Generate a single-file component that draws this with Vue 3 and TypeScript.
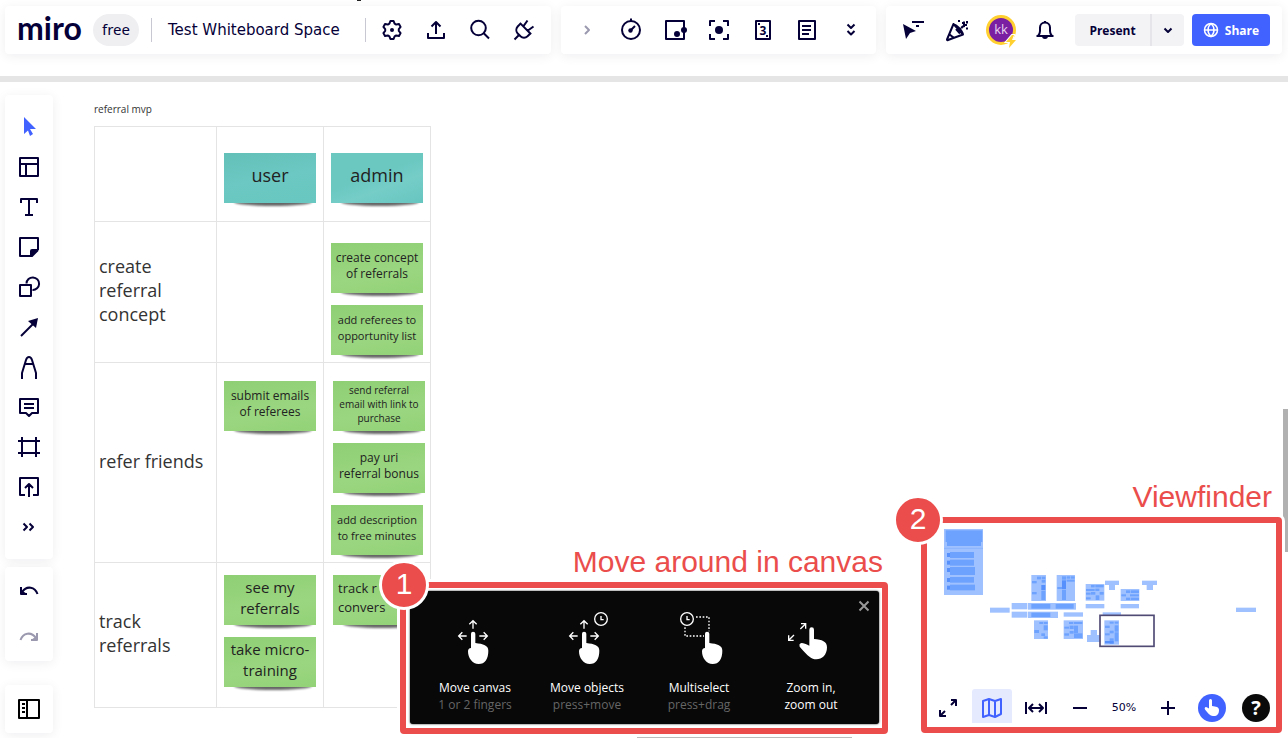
<script setup lang="ts">
interface Icon {
  name: string
  line?: string
  solid?: string
  glyph?: string
  tone?: string
}

interface Note {
  text: string[]
  size: string
  shifted?: boolean
}

interface Row {
  label: string[]
  kind: string
  user: Note[]
  admin: Note[]
}

interface Block {
  x: number
  y: number
  w: number
  h: number
  tone: string
}

const ring = (x: number, y: number, r: number): string =>
  `M${x - r} ${y}a${r} ${r} 0 1 0 ${2 * r} 0a${r} ${r} 0 1 0 ${-2 * r} 0Z`

const boardActions: Icon[] = [
  {
    name: 'Settings',
    line: 'M-1.6-9H1.6L2.6-6.3L4.2-5.4L7-5.9L8.6-3.1L6.8-.9V.9L8.6 3.1L7 5.9L4.2 5.4L2.6 6.3L1.6 9H-1.6L-2.6 6.3L-4.2 5.4L-7 5.9L-8.6 3.1L-6.8 .9V-.9L-8.6-3.1L-7-5.9L-4.2-5.4L-2.6-6.3Z',
    solid: ring(0, 0, 2),
  },
  { name: 'Export', line: 'M-8 3V8H8V3M0-8V4M-4.500-3.500L0-8L4.500-3.500' },
  { name: 'Search', line: ring(-1.5, -2, 7.3) + 'M4 3.500L9 8.500' },
  {
    name: 'Apps',
    line: 'M-4.200-7.100L7.100 4.200M-3.500-6.400L-6.300-3.500A5.200 5.200 0 0 0-6.300 3.500L-3.500 6.300A5.200 5.200 0 0 0 3.500 6.300L6.400 3.500M-5.500 5.500L-9.500 9.500M-.7-3.600L3.500-9.500M3.600 .7L9.500-3.500',
  },
]

const widgets: Icon[] = [
  { name: 'Collapse', line: 'M-2-4L2 0L-2 4', tone: 'muted' },
  { name: 'Timer', line: ring(0, 0, 9) + 'M0-11.500V-9M0 0L4-4', solid: ring(-0.5, 0.5, 2.2) },
  { name: 'Video chat', line: 'M9-2V-9H-9V9H9V2', solid: ring(2, 4, 3) + ring(9, 0, 3) },
  { name: 'Focus', line: 'M-9-4V-9H-4M4-9H9V-4M9 4V9H4M-4 9H-9V4', solid: ring(0, 0, 4) },
  { name: 'Estimation', line: 'M-7-9H7V9H-7Z', solid: 'M-5-7H-3V-5H-5ZM3 5H5V7H3Z', glyph: '3' },
  { name: 'Notes', line: 'M-8-9H8V9H-8ZM-5-4H4M-5 0H4M-5 4H2' },
  { name: 'More', line: 'M-3.500-5.500L0-2L3.500-5.500M-3.500 1L0 4.500L3.500 1' },
]

const socials: Icon[] = [
  { name: 'Hide cursors', line: 'M-1-8H11M3-4H6', solid: 'M-10-6L3 1L-3 3L-7 9Z' },
  {
    name: 'Reactions',
    line: 'M-3.500-6L-10 9.500Q-10 10.500-9 10L6 4.500ZM-4-6Q3-3 6 4M-8 4L-3 8M-1-1L3 3.500M4.500-1.500Q4.500-4 8-4M10-9V-6.500M7-8.500V-5H10M9-1.500H11',
    solid: 'M1-10H3V-8H1ZM5-8H7V-6H5Z',
  },
]

const bell = 'M-8.500 6H8.500M-7 6Q-5 4-5 1V-2.500A5 5 0 0 1 5-2.500V1Q5 4 7 6'

const tools: Icon[] = [
  { name: 'Select', solid: 'M-5-10L7 2H1L4 7L1 9L-1 3.500L-5 7Z', tone: 'active' },
  { name: 'Templates', line: 'M-9-9H9V9H-9ZM-9-3H9M-3-3V9' },
  { name: 'Text', line: 'M-8-4V-8H8V-4M0-8V8M-4 8H4' },
  { name: 'Sticky note', line: 'M9 3V-9H-9V9H3L9 3', solid: 'M1 9V4Q1 2 3 2H9L3 9Z' },
  { name: 'Shapes', line: 'M-9-2H2V9H-9ZM-2.500-3.500A6.300 6.300 0 1 1 3.500 3' },
  { name: 'Connection line', line: 'M-8 9L5-4', solid: 'M9-9L7 1L-1-6Z' },
  { name: 'Pen', line: 'M-7 12V6L-3-7Q-2-10 0-10Q2-10 3-7L7 6V12M-4-3H4' },
  { name: 'Comment', line: 'M-9-8H9V6H3L0 9L-3 6H-9ZM-5-3H5M-5 1H5' },
  { name: 'Frame', line: 'M-7-10V10M7-10V10M-11-6H11M-11 6H11' },
  { name: 'Upload', line: 'M-4 8H-9V-9H9V8H4M0 10V-2M-4 1L0-3L4 1' },
  { name: 'More tools', line: 'M-5.500-3.500L-2 0L-5.500 3.500M.5-3.500L4 0L.5 3.500' },
]

const history: Icon[] = [
  { name: 'Undo', line: 'M8.500 3C6-4-2-6-7 1M-8-4V3H-2', solid: 'M-9-2L-2 3H-9Z' },
  { name: 'Redo', line: 'M-8.500 3C-6-4 2-6 7 1M8-4V3H2', solid: 'M9-2L2 3H9Z', tone: 'muted' },
]

const rows: Row[] = [
  {
    label: ['create', 'referral', 'concept'],
    kind: 'create',
    user: [],
    admin: [
      { text: ['create concept', 'of referrals'], size: 'medium' },
      { text: ['add referees to', 'opportunity list'], size: 'small' },
    ],
  },
  {
    label: ['refer friends'],
    kind: 'refer',
    user: [{ text: ['submit emails', 'of referees'], size: 'medium' }],
    admin: [
      { text: ['send referral', 'email with link to', 'purchase'], size: 'tiny', shifted: true },
      { text: ['pay uri', 'referral bonus'], size: 'medium', shifted: true },
      { text: ['add description', 'to free minutes'], size: 'small' },
    ],
  },
  {
    label: ['track', 'referrals'],
    kind: 'track',
    user: [
      { text: ['see my', 'referrals'], size: 'large' },
      { text: ['take micro-', 'training'], size: 'large' },
    ],
    admin: [{ text: ['track r', 'convers'], size: 'regular', shifted: true }],
  },
]

const block = (x: number, y: number, w: number, h: number, tone = 'pale'): Block => ({ x, y, w, h, tone })

const blocks: Block[] = [
  block(162, 177, 117, 198),
  block(167, 181, 110, 35, 'mid'), block(171, 216, 102, 12, 'mid'),
  ...[[246, 18, 72], [269, 18, 72], [291, 24, 75], [321, 17, 72], [344, 17, 75]].flatMap(([y, h, w]) => [
    block(180, y, w, h, 'mid'), block(171, y + 3, 9, 12, 'deep'),
  ]),
  block(300, 413, 59, 15), block(1038, 413, 60, 13),
  block(424, 315, 44, 78), block(500, 315, 55, 78), block(587, 342, 56, 50), block(692, 357, 56, 36),
  block(645, 332, 42, 13), block(657, 345, 18, 15), block(756, 332, 45, 13), block(770, 345, 19, 15),
  block(365, 399, 47, 19), block(414, 399, 144, 20), block(424, 402, 57, 14, 'mid'), block(497, 402, 54, 14, 'mid'),
  block(587, 402, 56, 13), block(692, 402, 55, 13),
  block(365, 425, 47, 18), block(414, 425, 90, 19), block(424, 428, 57, 13, 'mid'),
  block(521, 427, 58, 13), block(638, 427, 55, 10),
  block(432, 451, 42, 56), block(521, 451, 58, 56), block(591, 495, 40, 21), block(602, 480, 19, 15),
  block(643, 451, 44, 73),
  block(441, 320, 12, 8, 'mid'), block(455, 320, 11, 8, 'mid'), block(455, 330, 11, 8, 'mid'), block(426, 333, 14, 7, 'mid'),
  block(454, 345, 12, 15, 'deep'), block(454, 362, 12, 28, 'mid'), block(426, 366, 14, 7, 'mid'),
  block(516, 319, 12, 10, 'mid'), block(530, 319, 11, 7, 'mid'), block(543, 319, 11, 7, 'mid'), block(530, 329, 24, 6, 'mid'),
  block(516, 331, 12, 26, 'deep'), block(502, 351, 14, 6, 'mid'), block(516, 359, 12, 31, 'mid'),
  block(603, 345, 11, 7, 'mid'), block(616, 345, 25, 7, 'mid'), block(588, 357, 26, 6, 'mid'), block(616, 356, 12, 7, 'mid'),
  block(603, 366, 13, 8, 'mid'), block(629, 366, 12, 8, 'mid'), block(588, 368, 14, 6, 'mid'), block(617, 376, 11, 14, 'mid'), block(588, 382, 14, 6, 'mid'),
  block(708, 361, 12, 8, 'mid'), block(722, 361, 25, 8, 'mid'), block(694, 373, 14, 6, 'mid'), block(720, 373, 27, 6, 'mid'), block(708, 383, 12, 7, 'mid'), block(722, 383, 25, 7, 'mid'),
  block(448, 456, 12, 6, 'mid'), block(462, 456, 11, 6, 'mid'), block(461, 466, 12, 15, 'mid'), block(433, 480, 14, 9, 'mid'), block(454, 490, 11, 8, 'mid'), block(461, 499, 12, 7, 'mid'),
  block(537, 456, 12, 6, 'mid'), block(551, 456, 26, 6, 'mid'), block(523, 470, 14, 6, 'mid'), block(539, 467, 12, 10, 'mid'), block(552, 467, 12, 22, 'mid'),
  block(539, 483, 12, 8, 'mid'), block(523, 490, 14, 7, 'mid'), block(552, 490, 25, 14, 'mid'),
  block(659, 455, 12, 6, 'mid'), block(674, 455, 11, 6, 'mid'), block(645, 467, 14, 7, 'mid'), block(674, 466, 11, 19, 'mid'),
  block(659, 482, 12, 8, 'mid'), block(645, 490, 14, 6, 'mid'), block(674, 487, 11, 27, 'mid'), block(659, 505, 12, 17, 'mid'), block(645, 513, 26, 7, 'deep'),
]

const hand =
  'M213 281Q213 275 219 275Q226 275 226 281V309C250 312 265 316 265 332C265 356 255 372 236 372C217 372 204 354 204 334Q204 325 213 324Z'
const arrows = 'M219 243V266M208 253L219 242L230 253M177 288H200M187 277L176 288L187 299M238 288H261M251 277L262 288L251 299'

interface Tip {
  title: string
  detail: string
  bright?: boolean
  x: number
  solid: string
  solidX: number
  line: string
  lineX: number
  clock?: number
  dots?: string
}

const tips: Tip[] = [
  { title: 'Move canvas', detail: '1 or 2 fingers', x: 57, solid: hand, solidX: 0, line: arrows, lineX: 0 },
  { title: 'Move objects', detail: 'press+move', x: 393, solid: hand, solidX: 333, line: arrows, lineX: 333, clock: 603 },
  {
    title: 'Multiselect', detail: 'press+drag', x: 729, solid: hand, solidX: 702, line: '', lineX: 0, clock: 861,
    dots: 'M888 231H927V274M855 262V288H912',
  },
  {
    title: 'Zoom in,', detail: 'zoom out', bright: true, x: 1065, solidX: 0, lineX: 0,
    solid: 'M1228 269Q1228 262 1235 262Q1242 262 1242 269V297C1266 299 1281 304 1281 322C1281 345 1266 358 1249 358C1234 358 1226 350 1199 320Q1196 313 1202 310Q1208 307 1228 317Z',
    line: 'M1203 251H1217V266M1217 251L1201 267M1166 286V301H1181M1166 301L1182 285',
  },
]

const mapControls: Icon[] = [
  { name: 'Full screen', line: 'M3-3L8-8M3-8H8V-2M-3 3L-8 8M-8 2V8H-2' },
  { name: 'Map', line: 'M-9-7L-3-9L3-7L9-9V6L3 9L-3 7L-9 9ZM-3-9V7M3-7V9', tone: 'selected' },
  { name: 'Fit to screen', line: 'M-10-6V6M10-6V6M-6 0H6M-3-4L-7 0L-3 4M3-4L7 0L3 4' },
  { name: 'Zoom out', line: 'M-7 0H7' },
]
</script>

<template>
  <div class="page">
    <header class="header">
      <span class="mark"></span>
      <div class="card card-board">
        <a class="logo" href="#">miro</a>
        <span class="plan">free</span>
        <a class="board-name" href="#">Test Whiteboard Space</a>
        <button v-for="icon in boardActions" :key="icon.name" class="tool" :aria-label="icon.name">
          <svg class="icon" viewBox="-12 -12 24 24">
            <path class="line" :d="icon.line" />
            <path v-if="icon.solid" class="solid" :d="icon.solid" />
          </svg>
        </button>
      </div>
      <div class="card card-widgets">
        <button v-for="icon in widgets" :key="icon.name" class="tool" :class="icon.tone" :aria-label="icon.name">
          <svg class="icon" viewBox="-12 -12 24 24">
            <path class="line" :d="icon.line" />
            <path v-if="icon.solid" class="solid" :d="icon.solid" />
            <text v-if="icon.glyph" class="glyph" x="0" y="5">{{ icon.glyph }}</text>
          </svg>
        </button>
      </div>
      <div class="card card-share">
        <button v-for="icon in socials" :key="icon.name" class="tool" :aria-label="icon.name">
          <svg class="icon" viewBox="-12 -12 24 24">
            <path class="line" :d="icon.line" />
            <path class="solid" :d="icon.solid" />
          </svg>
        </button>
        <button class="tool" aria-label="Profile">
          <span class="avatar">
            kk
            <svg class="bolt" viewBox="0 0 14 14"><path d="M8 1L2 8H6L5 14L12 6H8L10 1Z" /></svg>
          </span>
        </button>
        <button class="tool" aria-label="Notifications">
          <svg class="icon" viewBox="-12 -12 24 24">
            <path class="line" :d="bell" />
            <path class="solid" d="M-3 6H3A3 3 0 0 1-3 6Z" />
            <path class="line" d="M0-9V-7" />
          </svg>
        </button>
        <div class="present">
          <button class="present-main">Present</button>
          <button class="present-more" aria-label="Present options">
            <svg class="icon" viewBox="-12 -12 24 24"><path class="line" d="M-3.500-1.500L0 2L3.500-1.500" /></svg>
          </button>
        </div>
        <button class="share">
          <svg class="globe" viewBox="-8 -8 16 16">
            <path :d="ring(0, 0, 6.500)" />
            <path d="M-6.500 0H6.500M0-6.500C-4-3-4 3 0 6.500C4 3 4-3 0-6.500" />
          </svg>
          Share
        </button>
      </div>
    </header>

    <main class="workspace">
      <nav class="rail">
        <div class="panel tools">
          <button v-for="icon in tools" :key="icon.name" class="tool" :class="icon.tone" :aria-label="icon.name">
            <svg class="icon" viewBox="-12 -12 24 24">
              <path v-if="icon.line" class="line" :d="icon.line" />
              <path v-if="icon.solid" class="solid" :d="icon.solid" />
            </svg>
          </button>
        </div>
        <div class="panel history">
          <button v-for="icon in history" :key="icon.name" class="tool" :class="icon.tone" :aria-label="icon.name">
            <svg class="icon" viewBox="-12 -12 24 24">
              <path class="line" :d="icon.line" />
              <path class="solid" :d="icon.solid" />
            </svg>
          </button>
        </div>
        <div class="panel frames">
          <button class="tool black" aria-label="Open frames">
            <svg class="icon" viewBox="-12 -12 24 24">
              <path class="line" d="M-10-9H10V9H-10ZM-2-9V9M-7-5H-4M-7-1H-4M-7 3H-4" />
            </svg>
          </button>
        </div>
      </nav>

      <section class="board">
        <h1 class="board-title">referral mvp</h1>
        <table class="grid">
          <thead>
            <tr class="row-head">
              <td class="label-col"></td>
              <th scope="col"><div class="note teal heading">user</div></th>
              <th scope="col"><div class="note teal heading alt">admin</div></th>
            </tr>
          </thead>
          <tbody>
            <tr v-for="row in rows" :key="row.kind" :class="'row-' + row.kind">
              <th class="row-label" scope="row">
                <span v-for="part in row.label" :key="part" class="text-line">{{ part }}</span>
              </th>
              <td v-for="(notes, column) in [row.user, row.admin]" :key="column">
                <div class="stack">
                  <div
                    v-for="note in notes"
                    :key="note.text[0]"
                    class="note"
                    :class="[note.size, { shifted: note.shifted }]"
                  >
                    <span v-for="part in note.text" :key="part" class="text-line">{{ part }}</span>
                  </div>
                </div>
              </td>
            </tr>
          </tbody>
        </table>
      </section>
    </main>

    <span class="scroll-y"></span>
    <span class="scroll-x"></span>

    <section class="callout callout-move">
      <h2 class="callout-name">Move around in canvas</h2>
      <div class="callout-box">
        <span class="badge">1</span>
        <div class="tips">
          <div v-for="tip in tips" :key="tip.title" class="tip">
            <svg class="tip-art" :viewBox="`${tip.x} 198 336 192`">
              <path class="tip-solid" :d="tip.solid" :transform="`translate(${tip.solidX} 0)`" />
              <path class="tip-line" :d="tip.line" :transform="`translate(${tip.lineX} 0)`" />
              <path v-if="tip.dots" class="tip-line tip-dots" :d="tip.dots" />
              <g v-if="tip.clock" class="tip-line" :transform="`translate(${tip.clock} 237)`">
                <circle r="19" />
                <path d="M0 -9V2H8" />
              </g>
            </svg>
            <strong class="tip-title">{{ tip.title }}</strong>
            <span class="tip-detail" :class="{ bright: tip.bright }">{{ tip.detail }}</span>
          </div>
          <button class="close" aria-label="Close">
            <svg viewBox="-6 -6 12 12"><path d="M-4.500-4.500L4.500 4.500M4.500-4.500L-4.500 4.500" /></svg>
          </button>
        </div>
      </div>
    </section>

    <section class="callout callout-view">
      <h2 class="callout-name">Viewfinder</h2>
      <div class="callout-box">
        <span class="badge">2</span>
        <svg class="minimap" viewBox="111 159 1047 498">
          <rect v-for="(b, i) in blocks" :key="i" :class="b.tone" :x="b.x" :y="b.y" :width="b.w" :height="b.h" />
          <path class="seam" d="M162 235H279" />
          <rect class="viewport" x="630" y="436" width="162" height="93" />
        </svg>
        <div class="map-bar">
          <button v-for="icon in mapControls" :key="icon.name" class="tool" :class="icon.tone" :aria-label="icon.name">
            <svg class="icon" viewBox="-12 -12 24 24"><path class="line" :d="icon.line" /></svg>
          </button>
          <button class="tool percent">50%</button>
          <button class="tool" aria-label="Zoom in">
            <svg class="icon" viewBox="-12 -12 24 24"><path class="line" d="M-7 0H7M0-7V7" /></svg>
          </button>
          <button class="tool" aria-label="Touch mode">
            <svg class="round" viewBox="-14 -14 28 28">
              <circle class="round-blue" r="14" />
              <path class="round-hand" d="M-3-7.500Q-3-9-1.500-9Q0-9 0-7.500V-2C4-1.500 7-1 7 2C7 6 5 8 2 8C-1 8-3 7-7 1.500Q-8-.5-6 -1Q-5-1-3 .5Z" />
            </svg>
          </button>
          <button class="tool help" aria-label="Help"><span class="help-dot">?</span></button>
        </div>
      </div>
    </section>
  </div>
</template>

<style>
body {
  margin: 0;
  background: #fff;
}
</style>

<style scoped>
.page {
  position: relative;
  display: flex;
  flex-direction: column;
  min-height: 100vh;
  overflow: hidden;
  background: #fff;
  color: #050038;
  font-family: "Open Sans", "Noto Sans", sans-serif;
}
button {
  margin: 0;
  padding: 0;
  border: 0;
  background: none;
  color: inherit;
  font: inherit;
  cursor: pointer;
}
a {
  color: inherit;
  text-decoration: none;
}
.header {
  position: relative;
  display: grid;
  grid-template-columns: 546fr 315fr 396fr;
  gap: 10px;
  padding: 6px 6px 22px 5px;
  border-bottom: 6px solid #e5e5e5;
}
.mark {
  position: absolute;
  top: 0;
  left: 357px;
  width: 4px;
  height: 1px;
  background: #222;
}
.card {
  display: flex;
  align-items: center;
  box-sizing: border-box;
  height: 48px;
  border-radius: 4px;
  background: #fff;
  box-shadow: 0 2px 12px rgba(5, 0, 56, 0.07);
}
.card-board {
  padding: 0 5px 0 12px;
}
.card-widgets {
  justify-content: center;
}
.card-share {
  padding: 0 12px 0 5px;
}
.tool {
  display: flex;
  flex: none;
  align-items: center;
  justify-content: center;
  width: 44px;
  height: 40px;
}
.icon {
  display: block;
  width: 24px;
  height: 24px;
  overflow: visible;
}
.line {
  fill: none;
  stroke: currentColor;
  stroke-width: 2;
  stroke-linejoin: round;
}
.solid {
  fill: currentColor;
}
.glyph {
  fill: currentColor;
  font: 700 12px "Open Sans", sans-serif;
  text-anchor: middle;
}
.muted {
  color: #9b99af;
}
.active {
  color: #4262ff;
}
.black {
  color: #000;
}
.logo {
  flex: none;
  width: 76px;
  padding-bottom: 5px;
  font: 700 32px/36px Lato, sans-serif;
}
.plan {
  flex: none;
  width: 46px;
  height: 32px;
  border-radius: 16px;
  background: #efeff2;
  font: 15px/30px "Noto Sans", sans-serif;
  text-align: center;
}
.board-name {
  flex: 1;
  margin-left: 12px;
  margin-right: 4px;
  padding-left: 16px;
  border: solid #c8c8d2;
  border-width: 0 1px;
  font: 15px/24px "DejaVu Sans", sans-serif;
  white-space: nowrap;
}
.avatar {
  position: relative;
  box-sizing: border-box;
  width: 30px;
  height: 30px;
  border: 3px solid #ffd02f;
  border-radius: 50%;
  background: #7b1fa2;
  color: #e6d3ee;
  font-size: 13px;
  line-height: 23px;
  text-align: center;
}
.bolt {
  position: absolute;
  right: -5px;
  bottom: -6px;
  width: 14px;
  height: 14px;
  overflow: visible;
}
.bolt path {
  fill: #ffd02f;
  stroke: #fff;
  stroke-width: 2;
  paint-order: stroke;
}
.present {
  display: flex;
  flex: 1;
  height: 32px;
  margin: 0 8px;
  overflow: hidden;
  border-radius: 4px;
  background: #f3f3f6;
}
.present-main {
  flex: 1;
  border-right: 2px solid #e6e6ea;
  font-size: 12px;
  font-weight: 700;
}
.present-more {
  display: flex;
  align-items: center;
  justify-content: center;
  width: 32px;
}
.share {
  display: flex;
  align-items: center;
  justify-content: center;
  gap: 6px;
  width: 78px;
  height: 32px;
  border-radius: 4px;
  background: #4262ff;
  color: #fff;
  font-size: 12px;
  font-weight: 700;
}
.globe {
  width: 16px;
  height: 16px;
  fill: none;
  stroke: #fff;
  stroke-width: 1.500;
}
.workspace {
  display: flex;
  flex: 1;
  gap: 41px;
  padding: 13px 5px 5px;
}
.rail {
  display: flex;
  flex-direction: column;
  width: 48px;
}
.panel {
  display: flex;
  flex-direction: column;
  align-items: center;
  border-radius: 4px;
  background: #fff;
  box-shadow: 0 2px 12px rgba(5, 0, 56, 0.07);
}
.tools {
  padding: 12px 0;
}
.history {
  margin-top: 8px;
  padding: 1px 0;
}
.history .tool {
  height: 46px;
}
.frames {
  margin-top: 24px;
  padding: 4px 0;
}
.board {
  padding-top: 6px;
  color: #333;
}
.board-title {
  margin: 0 0 9px;
  font-size: 10px;
  font-weight: 400;
  line-height: 16px;
}
.grid {
  position: relative;
  z-index: 0;
  width: 337px;
  border-collapse: collapse;
  table-layout: fixed;
}
.grid td,
.grid th {
  padding: 0;
  border: 1px solid #e4e4e4;
  font-weight: 400;
  vertical-align: top;
}
.label-col {
  width: 121px;
}
.row-head {
  height: 95px;
}
.row-head .note {
  margin-top: 26px;
}
.row-create {
  height: 141px;
}
.row-refer {
  height: 200px;
}
.row-track {
  height: 145px;
}
.grid .row-label {
  padding: 0 0 4px 4px;
  font-size: 18px;
  line-height: 24px;
  text-align: left;
  vertical-align: middle;
}
.text-line {
  display: block;
  white-space: nowrap;
}
.stack {
  display: flex;
  flex-direction: column;
  gap: 12px;
}
.row-create .stack {
  padding-top: 21px;
}
.row-refer .stack {
  padding-top: 18px;
}
.row-track .stack {
  padding-top: 12px;
}
.note {
  position: relative;
  display: flex;
  flex-direction: column;
  justify-content: center;
  box-sizing: border-box;
  width: 92px;
  height: 50px;
  margin: 0 auto;
  padding-bottom: 4px;
  background: linear-gradient(170deg, #8fcf74, #9ad680 60%, #93d277);
  color: #222;
  text-align: center;
}
.note::before {
  content: "";
  position: absolute;
  z-index: -1;
  right: 4px;
  bottom: -3px;
  left: 10px;
  height: 8px;
  border-radius: 50%;
  background: rgba(0, 0, 0, 0.6);
  filter: blur(1px);
}
.teal {
  background: linear-gradient(170deg, #62c0b9, #6bc8c2 50%, #68c7c0);
}
.teal.alt {
  background: linear-gradient(160deg, #6ac8c1 45%, #76cdc8 65%, #66c5bf);
}
.shifted {
  margin-left: 9px;
}
.heading {
  padding-bottom: 6px;
  font-size: 18px;
  line-height: 24px;
}
.large {
  font-size: 15px;
  line-height: 21px;
}
.regular {
  padding-left: 5px;
  font-size: 13px;
  line-height: 19px;
  text-align: left;
}
.medium {
  font-size: 12px;
  line-height: 16px;
}
.small {
  font-size: 11px;
  line-height: 16px;
}
.tiny {
  font-size: 10px;
  line-height: 14px;
}
.scroll-y {
  position: absolute;
  top: 409px;
  right: 0;
  width: 5px;
  height: 143px;
  background: #b1b1b1;
}
.scroll-x {
  position: absolute;
  right: 436px;
  bottom: 0;
  width: 215px;
  height: 1px;
  background: #bbb;
}
.callout {
  position: absolute;
  z-index: 2;
}
.callout-move {
  right: 400px;
  bottom: 4px;
  width: 488px;
}
.callout-view {
  right: 6px;
  bottom: 5px;
  width: 361px;
}
.callout-name {
  margin: 0 0 3px;
  padding-right: 5px;
  color: #ea4d4b;
  font: 400 30px/34px "Liberation Sans", Arial, sans-serif;
  text-align: right;
}
.callout-view .callout-name {
  padding-right: 10px;
}
.callout-box {
  position: relative;
  border: 6px solid #ea4d4b;
  border-radius: 4px;
  background: #fff;
  box-shadow: 0 0 0 3px #fff;
}
.badge {
  position: absolute;
  top: -28px;
  left: -27px;
  z-index: 1;
  width: 44px;
  height: 44px;
  border: 3px solid #fff;
  border-radius: 50%;
  background: #ea4d4b;
  color: #fff;
  font: 30px/42px "Liberation Sans", Arial, sans-serif;
  text-align: center;
}
.callout-view .badge {
  left: -34px;
}
.tips {
  position: relative;
  display: flex;
  margin: 3px 3px 4px 4px;
  padding: 15px 12px 11px 9px;
  border-radius: 3px;
  background: #080808;
  box-shadow: 0 0 2px #080808;
  color: #fff;
}
.tip {
  display: flex;
  flex: 1;
  flex-direction: column;
  align-items: center;
  font-size: 12px;
  line-height: 17px;
}
.tip-art {
  width: 112px;
  height: 64px;
  margin-bottom: 9px;
}
.tip-solid {
  fill: #fff;
}
.tip-line {
  fill: none;
  stroke: #fff;
  stroke-width: 4;
}
.tip-dots {
  stroke-dasharray: 5 5;
}
.tip-title {
  font-weight: 500;
}
.tip-detail {
  color: #666;
}
.tip-detail.bright {
  color: #fff;
  font-weight: 500;
}
.close {
  position: absolute;
  top: 9px;
  right: 9px;
  width: 12px;
  height: 12px;
}
.close svg {
  display: block;
  fill: none;
  stroke: #999;
  stroke-width: 2;
}
.minimap {
  display: block;
  width: 100%;
  height: 166px;
}
.pale {
  fill: #9fc1ff;
}
.mid {
  fill: #6ea2ff;
}
.deep {
  fill: #5590fc;
}
.seam {
  stroke: #8ab4ff;
  stroke-width: 3;
}
.viewport {
  fill: none;
  stroke: #504b75;
  stroke-width: 5;
}
.map-bar {
  display: flex;
  justify-content: space-between;
  padding: 0 0 4px 1px;
}
.map-bar .tool {
  width: 40px;
  height: 34px;
  padding-top: 4px;
}
.map-bar .selected {
  border-radius: 3px 3px 0 0;
  background: #e5eaff;
  color: #4262ff;
}
.map-bar .percent {
  font: 11px/16px "DejaVu Sans", sans-serif;
}
.round {
  width: 28px;
  height: 28px;
}
.round-blue {
  fill: #4262ff;
}
.round-hand {
  fill: #fff;
}
.help-dot {
  width: 28px;
  height: 28px;
  border-radius: 50%;
  background: #0a0a0a;
  color: #fff;
  font-size: 20px;
  font-weight: 700;
  line-height: 28px;
}
</style>
